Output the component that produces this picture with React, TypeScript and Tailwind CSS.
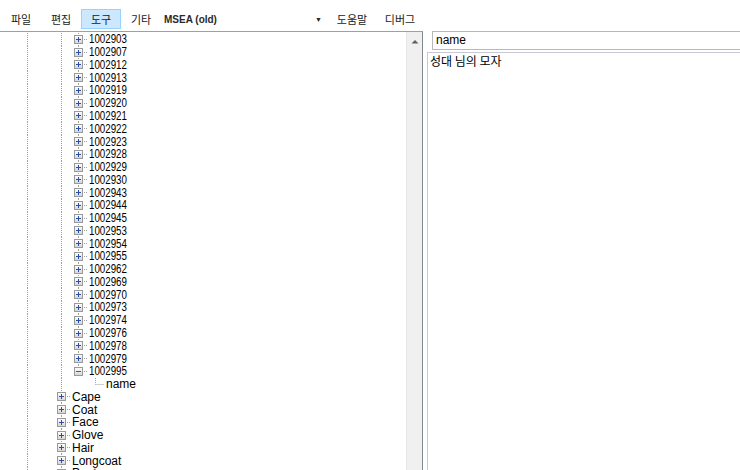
import React from 'react';

type Cell = 'line' | 'none' | 'plus' | 'minus' | 'plusLast' | 'minusLast' | 'elbow';

const ROW_H = 'h-[12.78px]';

const ids = [
  '1002903', '1002907', '1002912', '1002913', '1002919', '1002920', '1002921', '1002922',
  '1002923', '1002928', '1002929', '1002930', '1002943', '1002944', '1002945', '1002953',
  '1002954', '1002955', '1002962', '1002969', '1002970', '1002973', '1002974', '1002976',
  '1002978', '1002979',
];

const groups = ['Cape', 'Coat', 'Face', 'Glove', 'Hair', 'Longcoat', 'Pants'];

function Guide({ kind }: { kind: Cell }) {
  const dot = { stroke: '#a0a0a0', strokeWidth: 1, strokeDasharray: '1 1' };
  const box = kind === 'plus' || kind === 'minus' || kind === 'plusLast' || kind === 'minusLast';
  const last = kind === 'plusLast' || kind === 'minusLast';
  return (
    <svg width="17" height="13" viewBox="0 0 17 13" className="shrink-0 block">
      {kind === 'line' && <line x1="8.5" y1="0" x2="8.5" y2="13" {...dot} />}
      {box && <line x1="8.5" y1="0" x2="8.5" y2={last ? 6.5 : 13} {...dot} />}
      {box && <line x1="12" y1="6.5" x2="17" y2="6.5" {...dot} />}
      {kind === 'elbow' && (
        <>
          <line x1="8.5" y1="0" x2="8.5" y2="6.5" {...dot} />
          <line x1="8.5" y1="6.5" x2="17" y2="6.5" {...dot} />
        </>
      )}
      {box && (
        <>
          <defs>
            <linearGradient id="bx" x1="0" y1="0" x2="0" y2="1">
              <stop offset="0" stopColor="#ffffff" />
              <stop offset="1" stopColor="#d4d4d4" />
            </linearGradient>
          </defs>
          <rect x="4.5" y="2.5" width="8" height="8" fill="url(#bx)" stroke="#9a9a9a" />
          <line x1="6" y1="6.5" x2="11" y2="6.5" stroke={kind.startsWith('minus') ? '#5a5a5a' : '#2d4fa8'} />
          {kind.startsWith('plus') && <line x1="8.5" y1="4" x2="8.5" y2="9" stroke="#2d4fa8" />}
        </>
      )}
    </svg>
  );
}

function Row({ cells, label, narrow }: { cells: Cell[]; label: string; narrow?: boolean }) {
  return (
    <div className={`flex items-center ${ROW_H} pl-[19px]`}>
      {cells.map((c, i) => (
        <Guide key={i} kind={c} />
      ))}
      {narrow ? (
        // the old Gulim digits are tall and much narrower than Arial's
        <span className="ml-[2px] leading-[12px] text-[12.5px] inline-block origin-left scale-x-[0.78] whitespace-nowrap">
          {label}
        </span>
      ) : (
        <span className="ml-[2px] leading-[12px] text-[12px] whitespace-nowrap">{label}</span>
      )}
    </div>
  );
}

export default function App() {
  return (
    <div className="w-[740px] h-[470px] overflow-hidden bg-white text-black flex flex-col font-['Liberation_Sans',sans-serif]">
      {/* menu */}
      <div className="h-[31px] flex items-end pb-[2px] text-[11px] font-['Noto_Sans_CJK_KR',sans-serif] text-[#1a1a1a]">
        <div className="w-[1px]" />
        <div className="w-[40px] h-[20px] flex items-center justify-center">파일</div>
        <div className="w-[40px] h-[20px] flex items-center justify-center">편집</div>
        <div className="w-[40px] h-[20px] flex items-center justify-center bg-[#cce8ff] border border-[#99d1ff]">도구</div>
        <div className="w-[40px] h-[20px] flex items-center justify-center">기타</div>
        <div className="w-[166px] h-[20px] flex items-center pl-[3px] font-['Liberation_Sans',sans-serif] text-[10px] font-bold text-[#2a2a2a]">
          MSEA (old)
          <span className="ml-auto mr-[5px] text-[7px] leading-none">▼</span>
        </div>
        <div className="w-[50px] h-[20px] flex items-center justify-center">도움말</div>
        <div className="w-[46px] h-[20px] flex items-center justify-center">디버그</div>
      </div>

      <div className="flex flex-1 min-h-0">
        {/* tree */}
        <div className="w-[423px] border-t border-[#a0a0a0] border-r border-r-[#828790] flex min-h-0">
          <div className="flex-1 overflow-hidden pt-[1px]">
            {ids.map((id) => (
              <Row key={id} cells={['line', 'none', 'line', 'plus']} label={id} narrow />
            ))}
            <Row cells={['line', 'none', 'line', 'minusLast']} label="1002995" narrow />
            <Row cells={['line', 'none', 'line', 'none', 'elbow']} label="name" />
            {groups.map((g) => (
              <Row key={g} cells={['line', 'none', 'plus']} label={g} />
            ))}
          </div>
          <div className="w-[16px] bg-[#f0f0f0] border-l border-[#e6e6e6] flex flex-col items-center">
            <svg width="8" height="5" viewBox="0 0 8 5" className="mt-[7px]">
              <path d="M0.5 4.5 L4 1 L7.5 4.5 Z" fill="#606060" />
            </svg>
          </div>
        </div>

        {/* right panel */}
        <div className="flex-1 pl-[4px] flex flex-col">
          <div className="ml-[5px] h-[19px] border border-[#b8b8b8] border-r-0 flex items-center pl-[3px] pb-[2px] text-[12px]">
            name
          </div>
          <div className="mt-[2px] flex-1 border-t border-l border-[#c8c8d8] pl-[2px] text-[12px] font-['Noto_Sans_CJK_KR',sans-serif] leading-[16px]">
            성대 님의 모자
          </div>
        </div>
      </div>
    </div>
  );
}
